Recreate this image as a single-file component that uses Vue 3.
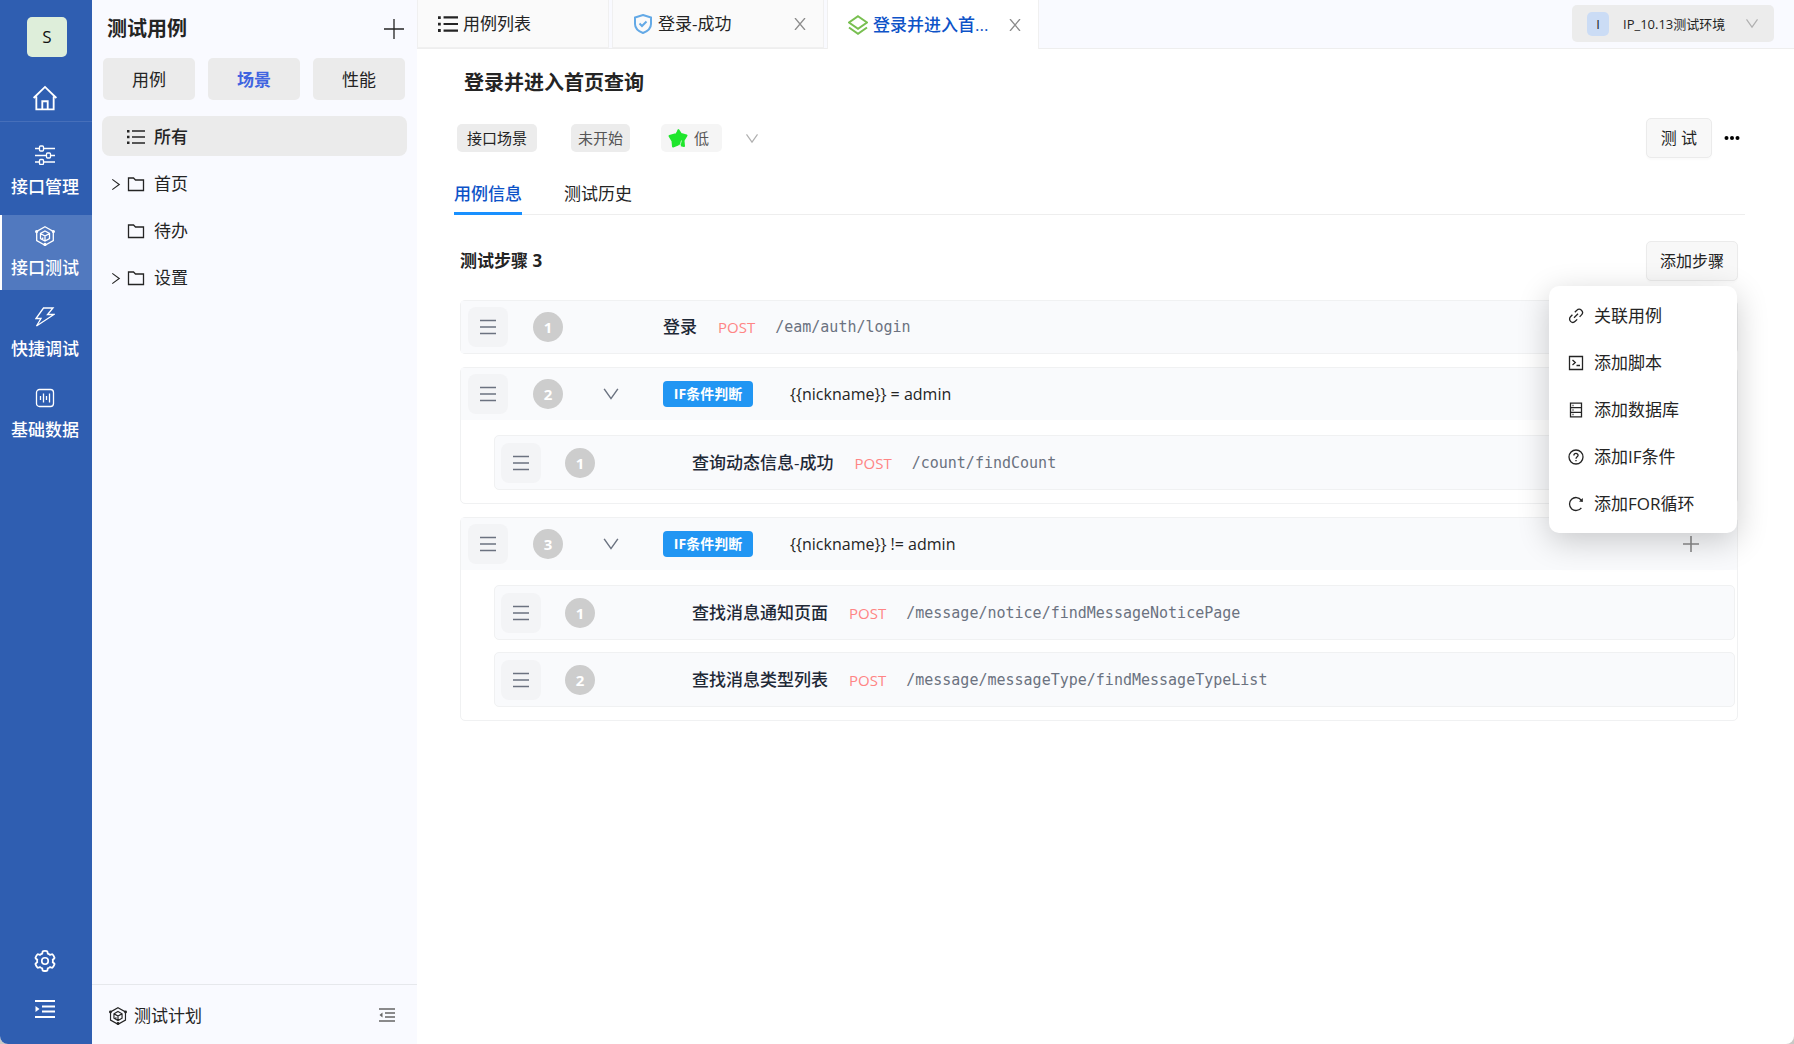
<script setup>
import { ref } from 'vue'

const menus = ref([
    { title: '接口管理', icon: 'sliders' },
    { title: '接口测试', icon: 'cube' },
    { title: '快捷调试', icon: 'bolt' },
    { title: '基础数据', icon: 'chart' }
])
const activeMenu = ref('接口测试')

const types = ['用例', '场景', '性能']
const activeType = ref('场景')

const folders = ref([
    { name: '首页', children: true },
    { name: '待办', children: false },
    { name: '设置', children: true }
])

const tabs = ref([
    { title: '用例列表', icon: 'list', kind: 'all', closable: false },
    { title: '登录-成功', icon: 'shield', kind: 'case', closable: true },
    { title: '登录并进入首页查询', icon: 'layers', kind: 'scene', closable: true }
])
const activeTab = ref('登录并进入首页查询')

const infoTabs = ['用例信息', '测试历史']
const activeInfo = ref('用例信息')

const steps = ref([
    { name: '登录', method: 'POST', path: '/eam/auth/login' },
    {
        condition: '{{nickname}} = admin',
        open: true,
        children: [
            { name: '查询动态信息-成功', method: 'POST', path: '/count/findCount' }
        ]
    },
    {
        condition: '{{nickname}} != admin',
        open: true,
        children: [
            { name: '查找消息通知页面', method: 'POST', path: '/message/notice/findMessageNoticePage' },
            { name: '查找消息类型列表', method: 'POST', path: '/message/messageType/findMessageTypeList' }
        ]
    }
])

const showAdd = ref(true)
const addItems = [
    { title: '关联用例', icon: 'link' },
    { title: '添加脚本', icon: 'script' },
    { title: '添加数据库', icon: 'database' },
    { title: '添加IF条件', icon: 'question' },
    { title: '添加FOR循环', icon: 'reload' }
]

// long titles keep their first six characters in the tab
function shortTitle(title) {
    return title.length > 6 ? title.slice(0, 6) + '...' : title
}

function closeTab(index) {
    tabs.value.splice(index, 1)
}
</script>

<template>
    <svg class="sprite" aria-hidden="true">
        <symbol id="i-home" viewBox="0 0 24 24">
            <path d="M1.5 12 12 1.8 22.5 12M4 10.5V22.5H20V10.5M9.5 22V15h5v7" />
        </symbol>
        <symbol id="i-sliders" viewBox="0 0 20 20">
            <path d="M0 3.5H4M9 3.5H20M0 10.5H11M16 10.5H20M0 17H4M9 17H20" />
            <rect x="4.5" y="1" width="4" height="5" rx="1" />
            <rect x="11.5" y="8" width="4" height="5" rx="1" />
            <rect x="4.5" y="14.5" width="4" height="5" rx="1" />
        </symbol>
        <symbol id="i-cube" viewBox="0 0 20 20">
            <path d="M10 .8 18.3 5.5V14.5L10 19.2 1.7 14.5V5.5Z" />
            <path d="M10 5 14.5 7.5V12.5L10 15 5.5 12.5V7.5ZM5.5 7.5 10 10 14.5 7.5M10 10V15M7.7 11.5V13" />
            <circle class="solid" cx="1.6" cy="5.5" r="1.6" />
            <circle class="solid" cx="18.4" cy="5.5" r="1.6" />
            <circle class="solid" cx="10" cy="18.4" r="1.6" />
        </symbol>
        <symbol id="i-bolt" viewBox="0 0 20 20">
            <path d="M8.5 1H18L12.5 7.5H19L1.5 19 6 11.5H1Z" />
        </symbol>
        <symbol id="i-chart" viewBox="0 0 20 20">
            <rect x="1.5" y="1.5" width="17" height="17" rx="3" />
            <path d="M5.5 8V12M8.5 5.5V14.5M11.5 8V12M14.5 5.5V14.5" />
        </symbol>
        <symbol id="i-gear" viewBox="30 20 964 984">
            <path stroke-width="80" d="M924.8 625.7l-65.5-56c3.1-19 4.7-38.4 4.7-57.8s-1.6-38.8-4.7-57.8l65.5-56a32 32 0 0 0 9.3-35.2l-.9-2.6a443.7 443.7 0 0 0-79.7-137.9l-1.8-2.1a32 32 0 0 0-35.1-9.5l-81.3 28.9c-30-24.6-63.5-44-99.7-57.6l-15.7-85a32 32 0 0 0-25.8-25.7l-2.7-.5c-52.1-9.4-106.9-9.4-159 0l-2.7.5a32 32 0 0 0-25.8 25.7l-15.8 85.4a351.9 351.9 0 0 0-99 57.4l-81.9-29.1a32 32 0 0 0-35.1 9.5l-1.8 2.1a446 446 0 0 0-79.7 137.9l-.9 2.6c-4.5 12.5-.8 26.5 9.3 35.2l66.3 56.6c-3.1 18.8-4.6 38-4.6 57.1 0 19.2 1.5 38.4 4.6 57.1L99 625.5a32 32 0 0 0-9.3 35.2l.9 2.6c18.1 50.4 44.9 96.9 79.7 137.9l1.8 2.1a32 32 0 0 0 35.1 9.5l81.9-29.1c29.8 24.5 63.1 43.9 99 57.4l15.8 85.4a32 32 0 0 0 25.8 25.7l2.7.5a449.4 449.4 0 0 0 159 0l2.7-.5a32 32 0 0 0 25.8-25.7l15.7-85a350 350 0 0 0 99.7-57.6l81.3 28.9a32 32 0 0 0 35.1-9.5l1.8-2.1c34.8-41.1 61.6-87.5 79.7-137.9l.9-2.6c4.5-12.3.8-26.3-9.3-35z" />
            <circle cx="512" cy="512" r="145" stroke-width="75" />
        </symbol>
        <symbol id="i-expand" viewBox="0 0 20 20">
            <path d="M0 2H20M7 7.5H20M7 12.5H20M0 18H20" />
            <path class="solid" d="M.5 7V13L4.5 10Z" />
        </symbol>
        <symbol id="i-collapse" viewBox="0 0 16 16">
            <path d="M0 2H16M6 6H16M6 10H16M0 14H16" />
            <path class="solid" d="M3.5 5.5V10.5L.5 8Z" />
        </symbol>
        <symbol id="i-plus" viewBox="0 0 20 20"><path d="M10 0V20M0 10H20" /></symbol>
        <symbol id="i-list" viewBox="0 0 18 18">
            <path d="M5 3H18M5 9H18M5 15H18" />
            <path class="solid" d="M0 2H2.5V4.500H0ZM0 7.8H2.5V10.3H0ZM0 13.6H2.5V16.1H0Z" />
        </symbol>
        <symbol id="i-right" viewBox="0 0 10 14"><path d="M1 1.5 8.5 7 1 12.5" /></symbol>
        <symbol id="i-down" viewBox="0 0 14 12"><path d="M1 1.5 7 10 13 1.5" /></symbol>
        <symbol id="i-folder" viewBox="0 0 18 16"><path d="M1.5 2H6.5L8.5 4H16.5V14.5H1.5Z" /></symbol>
        <symbol id="i-shield" viewBox="0 0 18 20">
            <path d="M9 1 17 3.5V10C17 14.5 13 17.5 9 19 5 17.5 1 14.5 1 10V3.5ZM5.5 9.5 8 12 12.5 7.5" />
        </symbol>
        <symbol id="i-layers" viewBox="0 0 20 20">
            <path d="M10 1.2 19 7.5 10 13.8 1 7.5ZM1 12.5 10 18.8 19 12.5" />
        </symbol>
        <symbol id="i-close" viewBox="0 0 12 12"><path d="M1 0 11 12M11 0 1 12" /></symbol>
        <symbol id="i-star" viewBox="0 0 20 20">
            <path class="solid" d="M10 1.5 13 6 18.5 7.5 15.5 12.5 16 18 10.5 16.5 5 18.5 4.5 13 1.5 8 7 6.5Z" />
            <path stroke-width="2" stroke-linejoin="round" d="M10 1.5 13 6 18.5 7.5 15.5 12.5 16 18 13 17.3M10 16.6 5 18.5 4.5 13 1.5 8 7 6.5Z" />
            <path stroke="#b9f5bd" stroke-width="1" d="M13.5 12.5 12 17.5" />
        </symbol>
        <symbol id="i-more" viewBox="0 0 16 16">
            <circle class="solid" cx="2.5" cy="8" r="2" />
            <circle class="solid" cx="8" cy="8" r="2" />
            <circle class="solid" cx="13.5" cy="8" r="2" />
        </symbol>
        <symbol id="i-menu" viewBox="0 0 16 16"><path d="M0 1.5H16M0 8H16M0 14.5H16" /></symbol>
        <symbol id="i-link" viewBox="0 0 16 16">
            <path d="M6.8 4.2 8.8 2.3A3.2 3.2 0 0 1 13.5 6.9L11.6 8.9M9.2 11.4 7.2 13.3A3.2 3.2 0 0 1 2.5 8.7L4.4 6.7M6 9.8 10 5.8" />
        </symbol>
        <symbol id="i-script" viewBox="0 0 16 16">
            <path d="M1.5 1.5H14.5V14.5H1.5ZM4.5 5 7.3 7.5 4.5 10M8.5 10.5H12" />
        </symbol>
        <symbol id="i-database" viewBox="0 0 16 16">
            <path d="M2.5 1.2H13.5V14.8H2.5ZM2.5 5.7H13.5M2.5 10.3H13.5M4.500 3.5H5.5M4.5 8H5.5M4.5 12.5H5.5" />
        </symbol>
        <symbol id="i-question" viewBox="0 0 16 16">
            <circle cx="8" cy="8" r="7" />
            <path d="M5.9 6.5C5.9 3.8 10.1 3.8 10.1 6.3 10.1 7.8 8 7.9 8 9.8M8 11V12.3" />
        </symbol>
        <symbol id="i-reload" viewBox="0 0 16 16">
            <path d="M13.3 11.8A6.5 6.5 0 1 1 13.2 4.1" />
            <path class="solid" d="M14.8 2V6L11 5.4Z" />
        </symbol>
    </svg>

    <div class="app">
        <nav class="rail">
            <div class="avatar">S</div>
            <a class="home" href="#" aria-label="首页"><svg class="icon i26"><use href="#i-home" /></svg></a>
            <div class="rail-menu">
                <a
                    v-for="item in menus"
                    :key="item.title"
                    href="#"
                    class="rail-item"
                    :class="{ active: activeMenu === item.title }"
                    @click.prevent="activeMenu = item.title"
                >
                    <svg class="icon i20"><use :href="'#i-' + item.icon" /></svg>
                    <span>{{ item.title }}</span>
                </a>
            </div>
            <div class="rail-foot">
                <button aria-label="设置"><svg class="icon i22"><use href="#i-gear" /></svg></button>
                <button aria-label="展开"><svg class="icon i20 bold"><use href="#i-expand" /></svg></button>
            </div>
        </nav>

        <aside class="side">
            <div class="side-head">
                <h2>测试用例</h2>
                <button aria-label="新增"><svg class="icon i20"><use href="#i-plus" /></svg></button>
            </div>
            <div class="types">
                <button
                    v-for="type in types"
                    :key="type"
                    :class="{ active: activeType === type }"
                    @click="activeType = type"
                >{{ type }}</button>
            </div>
            <div class="tree">
                <a href="#" class="tree-row all">
                    <span class="arrow"></span>
                    <svg class="icon i18"><use href="#i-list" /></svg>
                    <span>所有</span>
                </a>
                <a v-for="folder in folders" :key="folder.name" href="#" class="tree-row">
                    <span class="arrow"><svg v-if="folder.children" class="icon"><use href="#i-right" /></svg></span>
                    <svg class="icon i18"><use href="#i-folder" /></svg>
                    <span>{{ folder.name }}</span>
                </a>
            </div>
            <div class="side-foot">
                <a href="#"><svg class="icon i18"><use href="#i-cube" /></svg>测试计划</a>
                <button aria-label="收起"><svg class="icon i16"><use href="#i-collapse" /></svg></button>
            </div>
        </aside>

        <main class="main">
            <header class="tabbar">
                <div
                    v-for="(tab, index) in tabs"
                    :key="tab.title"
                    class="tab"
                    :class="[tab.kind, { active: activeTab === tab.title }]"
                >
                    <button class="tab-name" @click="activeTab = tab.title">
                        <svg class="icon i20"><use :href="'#i-' + tab.icon" /></svg>
                        <span>{{ shortTitle(tab.title) }}</span>
                    </button>
                    <button v-if="tab.closable" class="tab-close" aria-label="关闭" @click="closeTab(index)">
                        <svg class="icon i12"><use href="#i-close" /></svg>
                    </button>
                </div>
                <label class="env">
                    <span class="env-badge">I</span>
                    <select aria-label="环境">
                        <option>IP_10.13测试环境</option>
                    </select>
                    <svg class="icon chevron"><use href="#i-down" /></svg>
                </label>
            </header>

            <div class="content">
                <h1>登录并进入首页查询</h1>
                <div class="meta">
                    <span class="tag kind-tag">接口场景</span>
                    <span class="tag state-tag">未开始</span>
                    <label class="level">
                        <span class="tag level-tag">
                            <svg class="icon i20 star"><use href="#i-star" /></svg>
                            <select aria-label="优先级">
                                <option>低</option>
                            </select>
                        </span>
                        <svg class="icon chevron"><use href="#i-down" /></svg>
                    </label>
                    <button class="btn run">测 试</button>
                    <button class="more" aria-label="更多"><svg class="icon i16"><use href="#i-more" /></svg></button>
                </div>

                <div class="info-tabs">
                    <button
                        v-for="name in infoTabs"
                        :key="name"
                        :class="{ active: activeInfo === name }"
                        @click="activeInfo = name"
                    >{{ name }}</button>
                </div>

                <section class="steps">
                    <div class="steps-head">
                        <h3>测试步骤 {{ steps.length }}</h3>
                        <div class="adder">
                            <button class="btn" @click="showAdd = !showAdd">添加步骤</button>
                            <div v-show="showAdd" class="add-menu">
                                <button v-for="item in addItems" :key="item.title">
                                    <svg class="icon i16"><use :href="'#i-' + item.icon" /></svg>
                                    {{ item.title }}
                                </button>
                            </div>
                        </div>
                    </div>

                    <div v-for="(step, index) in steps" :key="index" class="step">
                        <div class="step-row">
                            <button class="handle" aria-label="拖动"><svg class="icon i16"><use href="#i-menu" /></svg></button>
                            <span class="num">{{ index + 1 }}</span>
                            <span class="fold">
                                <button v-if="step.children" aria-label="折叠" @click="step.open = !step.open">
                                    <svg class="icon i16"><use href="#i-down" /></svg>
                                </button>
                            </span>
                            <template v-if="step.children">
                                <span class="if-tag">IF条件判断</span>
                                <span class="condition">{{ step.condition }}</span>
                                <button class="add-child" aria-label="添加"><svg class="icon i16 bold"><use href="#i-plus" /></svg></button>
                            </template>
                            <template v-else>
                                <span class="name">{{ step.name }}</span>
                                <span class="method">{{ step.method }}</span>
                                <span class="path">{{ step.path }}</span>
                            </template>
                        </div>
                        <div v-if="step.children && step.open" class="children">
                            <div v-for="(child, i) in step.children" :key="child.path" class="child">
                                <button class="handle" aria-label="拖动"><svg class="icon i16"><use href="#i-menu" /></svg></button>
                                <span class="num">{{ i + 1 }}</span>
                                <span class="name">{{ child.name }}</span>
                                <span class="method">{{ child.method }}</span>
                                <span class="path">{{ child.path }}</span>
                            </div>
                        </div>
                    </div>
                </section>
            </div>
        </main>
    </div>
</template>

<style>
body {
    margin: 0;
    background: #c9c9c6;
}
</style>

<style scoped>
.sprite {
    position: absolute;
    width: 0;
    height: 0;
}

.app {
    display: flex;
    min-height: 100vh;
    background: #fff;
    border-radius: 0 0 8px 8px;
    overflow: hidden;
    color: #242424;
    font-family: "Open Sans", "Noto Sans CJK SC", sans-serif;
    font-size: 17px;
    line-height: 24px;
}

a {
    color: inherit;
    text-decoration: none;
}

button,
select {
    border: 0;
    padding: 0;
    margin: 0;
    background: none;
    color: inherit;
    font: inherit;
    cursor: pointer;
}

select {
    appearance: none;
}

h1,
h2,
h3 {
    margin: 0;
}

.icon {
    display: block;
    flex: none;
    fill: none;
    stroke: currentColor;
    stroke-width: 1.3;
}

.bold {
    stroke-width: 2;
}

.solid {
    fill: currentColor;
    stroke: none;
}

.i12 { width: 12px; height: 12px; }
.i16 { width: 16px; height: 16px; }
.i18 { width: 18px; height: 18px; }
.i20 { width: 20px; height: 20px; }
.i22 { width: 22px; height: 22px; }
.i26 { width: 26px; height: 26px; stroke-width: 1.7; }

.chevron {
    width: 14px;
    height: 11px;
    color: #b0b0b0;
}

/* left rail */
.rail {
    width: 92px;
    flex: none;
    display: flex;
    flex-direction: column;
    background: #2f5eb1;
    color: #fff;
}

.avatar {
    margin: 17px 0 0 27px;
    width: 40px;
    height: 40px;
    border-radius: 5px;
    background: #deeeda;
    color: #111;
    line-height: 40px;
    text-align: center;
}

.home {
    display: flex;
    justify-content: center;
    margin-top: 28px;
    padding: 0 2px 10px 0;
    border-bottom: 1px solid #466fba;
}

.rail-menu {
    display: flex;
    flex-direction: column;
    gap: 6px;
    margin-top: 12px;
}

.rail-item {
    display: flex;
    flex-direction: column;
    align-items: center;
    gap: 10px;
    height: 64px;
    padding-top: 11px;
    padding-right: 4px;
    border-left: 2px solid transparent;
    font-weight: 500;
}

.rail-item.active {
    background: #5179bf;
    background-clip: padding-box;
    border-left-color: #fff;
}

.rail-foot {
    margin-top: auto;
    padding: 0 2px 25px 0;
    display: flex;
    flex-direction: column;
    align-items: center;
    gap: 27px;
}

/* case tree */
.side {
    width: 325px;
    flex: none;
    display: flex;
    flex-direction: column;
    background: #f9faff;
}

.side-head {
    display: flex;
    align-items: center;
    justify-content: space-between;
    height: 58px;
    padding: 0 13px 0 15px;
}

.side-head h2 {
    font-size: 20px;
}

.types {
    display: flex;
    gap: 13px;
    padding: 0 12px 0 11px;
}

.types button {
    flex: 1;
    height: 42px;
    padding-top: 1px;
    border-radius: 5px;
    background: #ebebeb;
}

.types .active {
    color: #4064e0;
    font-weight: bold;
}

.tree {
    display: flex;
    flex-direction: column;
    gap: 7px;
    padding: 16px 10px 0;
}

.tree-row {
    box-sizing: border-box;
    display: flex;
    align-items: center;
    height: 40px;
    padding: 2px 0 0 8px;
    border-radius: 8px;
}

.tree-row .i18 {
    margin-right: 9px;
}

.tree-row.all {
    background: #ebebeb;
    font-weight: 500;
}

.arrow {
    width: 16px;
    padding-left: 1px;
}

.arrow .icon {
    width: 10px;
    height: 13px;
    stroke-width: 1.2;
}

.side-foot {
    margin-top: auto;
    display: flex;
    align-items: center;
    justify-content: space-between;
    height: 59px;
    padding: 0 22px 0 17px;
    border-top: 1px solid #e6e8ec;
}

.side-foot a {
    display: flex;
    align-items: center;
    gap: 7px;
    padding-top: 2px;
}

.side-foot button {
    color: #666;
}

/* tabs on top */
.main {
    flex: 1;
    min-width: 0;
}

.tabbar {
    display: flex;
    height: 48px;
    background: #f9faff;
    border-bottom: 1px solid #eee;
}

.tab {
    box-sizing: border-box;
    display: flex;
    align-items: center;
    justify-content: space-between;
    width: 212px;
    margin-right: 3px;
    padding: 0 17px 0 20px;
    background: #fafafa;
    border: 1px solid #f0f0f0;
    border-top: 0;
}

.tab.all {
    width: 192px;
}

.tab.active {
    background: #fff;
    color: #0d53c8;
    margin-bottom: -1px;
    border-bottom: 0;
    font-weight: 500;
}

.tab-name {
    display: flex;
    align-items: center;
    gap: 5px;
    white-space: nowrap;
}

.tab-name .icon {
    stroke-width: 2;
}

.tab.case .i20 {
    color: #63a9e6;
}

.tab.scene .i20 {
    color: #78bf50;
}

.tab-close {
    color: #8c8c8c;
}

.env {
    display: flex;
    align-items: center;
    margin: 5px 20px 6px auto;
    padding: 0 15px;
    gap: 14px;
    border-radius: 5px;
    background: #ececec;
    font-size: 13px;
}

.env select {
    min-width: 108px;
}

.env-badge {
    width: 22px;
    border-radius: 5px;
    background: #cbdcf5;
    text-align: center;
}

/* scene detail */
.content {
    padding: 15px 49px 40px 37px;
}

h1 {
    padding-left: 10px;
    font-size: 20px;
    line-height: 38px;
}

.meta {
    display: flex;
    align-items: center;
    margin-top: 16px;
    padding: 0 5px 0 3px;
    font-size: 15px;
}

.tag {
    height: 28px;
    line-height: 28px;
    border-radius: 5px;
    background: #ececec;
}

.kind-tag {
    padding: 0 10px;
    margin-right: 34px;
}

.state-tag {
    padding: 0 7px;
    margin-right: 31px;
    color: #555;
}

.level {
    display: flex;
    align-items: center;
    gap: 23px;
}

.level-tag {
    display: flex;
    align-items: center;
    gap: 6px;
    padding: 0 12px 0 7px;
    background: #f5f5f5;
    color: #555;
}

.star {
    color: #1fe62c;
}

.btn {
    box-sizing: border-box;
    height: 40px;
    padding: 0 13px;
    border: 1px solid #ebebeb;
    border-radius: 5px;
    background: #f8f8f8;
    font-size: 16px;
    box-shadow: 0 2px 2px #00000005;
}

.run {
    margin-left: auto;
    padding: 0 14px;
}

.more {
    margin-left: 12px;
    color: #000;
}

.info-tabs {
    display: flex;
    gap: 42px;
    margin-top: 14px;
    border-bottom: 1px solid #eee;
}

.info-tabs button {
    height: 43px;
    margin-bottom: -1px;
    padding-top: 3px;
    border-bottom: 3px solid transparent;
}

.info-tabs .active {
    color: #0d53c8;
    border-bottom-color: #1890ff;
    font-weight: 500;
}

/* steps */
.steps {
    padding: 0 7px 0 6px;
}

.steps-head {
    display: flex;
    align-items: center;
    justify-content: space-between;
    margin: 26px 0 19px;
}

.steps-head h3 {
    font-size: 17px;
}

.adder {
    position: relative;
}

.add-menu {
    position: absolute;
    z-index: 2;
    top: 45px;
    right: 1px;
    box-sizing: border-box;
    width: 188px;
    padding: 6px 0;
    border-radius: 10px;
    background: #fff;
    box-shadow: 0 8px 32px #00000033;
}

.add-menu button {
    display: flex;
    align-items: center;
    gap: 10px;
    width: 100%;
    height: 47px;
    padding-left: 19px;
}

.step {
    margin-bottom: 13px;
    border: 1px solid #f0f1f2;
    border-radius: 5px;
}

.step-row {
    display: flex;
    align-items: center;
    height: 52px;
    padding: 0 38px 0 7px;
    background: #f9fafc;
}

.children {
    display: flex;
    flex-direction: column;
    gap: 12px;
    padding: 15px 2px 13px 33px;
}

.child {
    box-sizing: border-box;
    display: flex;
    align-items: center;
    height: 55px;
    padding-left: 6px;
    border: 1px solid #f0f1f2;
    border-radius: 5px;
    background: #f9fafc;
}

.handle {
    display: flex;
    align-items: center;
    justify-content: center;
    width: 40px;
    height: 40px;
    border-radius: 8px;
    background: #f3f4f6;
    color: #6b7280;
}

.num {
    width: 30px;
    height: 30px;
    margin-left: 25px;
    border-radius: 50%;
    background: #cdcdcd;
    color: #fff;
    font-size: 15px;
    font-weight: bold;
    line-height: 30px;
    text-align: center;
}

.fold {
    display: flex;
    width: 60px;
    padding-left: 40px;
    color: #6b7280;
}

.if-tag {
    width: 90px;
    border-radius: 4px;
    background: #2196f3;
    color: #fff;
    font-size: 14px;
    font-weight: bold;
    line-height: 26px;
    text-align: center;
}

.condition {
    margin-left: 37px;
    font-size: 16px;
}

.add-child {
    margin-left: auto;
    color: #8a8a8a;
}

.name {
    color: #1f2937;
    font-weight: 500;
}

.child .num {
    margin-left: 24px;
    margin-right: 97px;
}

.method {
    margin-left: 21px;
    color: #ff8585;
    font-size: 15px;
}

.path {
    margin-left: 20px;
    color: #6b7280;
    font-family: "DejaVu Sans Mono", monospace;
    font-size: 15px;
}
</style>
